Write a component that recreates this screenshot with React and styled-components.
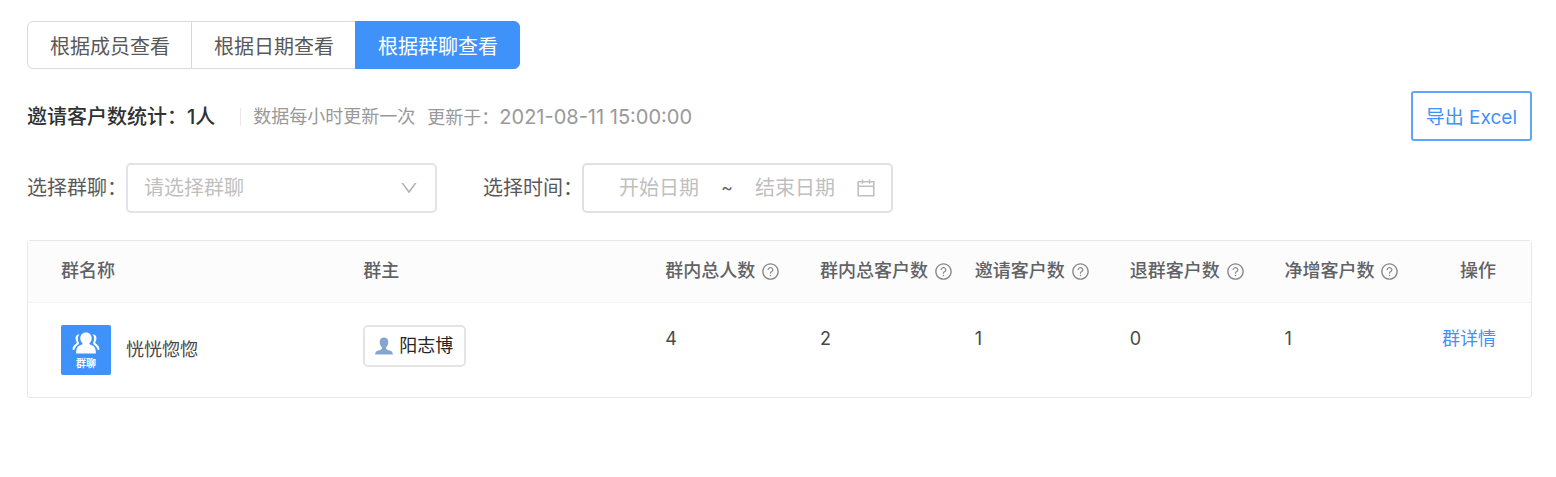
import React, {useState} from 'react';
import styled, {createGlobalStyle} from "styled-components";
import {AiOutlineCalendar, AiOutlineDown, AiOutlineQuestionCircle} from "react-icons/ai";

const GlobalStyle = createGlobalStyle`
    * {
        box-sizing: border-box;
    }

    body {
        margin: 0;
        background: #fff;
        color: #595959;
        font-family: Inter, "Noto Sans CJK SC", sans-serif;
        font-size: 18px;
        line-height: 26px;
    }

    button, input, select {
        font-family: inherit;
    }
`;

const Page = styled.main`
    padding: 21px 24px 24px 27px;
`;

const Tabs = styled.div`
    display: flex;
`;

const Tab = styled.button`
    height: 48px;
    padding: 0 21px 0 22px;
    margin-left: -1px;
    border: 1px solid ${({$active}) => $active ? '#3f92fa' : '#d9d9d9'};
    background: ${({$active}) => $active ? '#3f92fa' : '#fff'};
    color: ${({$active}) => $active ? '#fff' : '#595959'};
    font-size: 20px;
    cursor: pointer;

    &:first-child {
        margin-left: 0;
        border-radius: 6px 0 0 6px;
    }

    &:last-child {
        border-radius: 0 6px 6px 0;
    }
`;

const Summary = styled.div`
    display: flex;
    align-items: center;
    margin-top: 22px;
`;

const Total = styled.h1`
    margin: 0;
    padding-top: 2px;
    color: #303133;
    font-size: 20px;
    font-weight: 500;
`;

const UpdateInfo = styled.div`
    display: flex;
    align-items: center;
    gap: 12px;
    margin-left: 25px;
    padding-top: 2px;
    color: #999;

    &::before {
        content: "";
        width: 1px;
        height: 18px;
        background: #e8e8e8;
    }
`;

const UpdateTime = styled.time`
    font-size: 20px;
`;

const ExportButton = styled.button`
    height: 50px;
    margin-left: auto;
    padding: 0 13px 2px;
    border: 2px solid #5fa5fb;
    border-radius: 3px;
    background: #fff;
    color: #3f92fa;
    font-size: 19px;
    cursor: pointer;
`;

const Filters = styled.div`
    display: flex;
    gap: 46px;
    margin-top: 22px;
`;

const Field = styled.div`
    display: flex;
    align-items: center;
    font-size: 20px;
`;

const FieldLabel = styled.label`
    width: 99px;
    white-space: nowrap;
`;

const Control = styled.div`
    position: relative;
    display: flex;
    align-items: center;
    width: 311px;
    height: 50px;
    border: 2px solid ${({$tint}) => $tint || '#e0e0e0'};
    border-radius: 5px;
`;

const GroupSelect = styled.select`
    width: 100%;
    height: 100%;
    padding: 0 44px 0 16px;
    border: 0;
    outline: none;
    appearance: none;
    background: transparent;
    color: #bfbfbf;
    font-size: 20px;
`;

const SelectArrow = styled(AiOutlineDown)`
    position: absolute;
    right: 16px;
    color: #b0b0b0;
    font-size: 20px;
    pointer-events: none;
`;

const DateControl = styled(Control)`
    padding: 0 14px 0 19px;
    color: #bfbfbf;

    svg {
        flex: none;
        margin-left: 4px;
    }
`;

const DateInput = styled.input`
    flex: 1;
    min-width: 0;
    padding: 0;
    border: 0;
    outline: none;
    background: transparent;
    color: #595959;
    font-size: 20px;
    text-align: center;

    &::placeholder {
        color: #bfbfbf;
    }
`;

const Tilde = styled.span`
    width: 24px;
    color: #666;
    font-size: 18px;
    text-align: center;
`;

const TableBox = styled.div`
    margin-top: 27px;
    border: 1px solid #e8e8e8;
    border-radius: 3px;
`;

const Table = styled.table`
    width: 100%;
    border-collapse: collapse;
    table-layout: fixed;

    th, td {
        padding: 22px 0 22px 12px;
        text-align: left;
        vertical-align: top;
        white-space: nowrap;
    }

    th {
        height: 61px;
        padding-top: 0;
        padding-bottom: 0;
        border-bottom: 1px solid #f4f4f4;
        background: #fcfcfc;
        color: #606266;
        font-weight: 500;
        vertical-align: middle;
    }

    td {
        color: #484848;
        line-height: 28px;
    }

    th:first-child, td:first-child {
        padding-left: 33px;
    }

    th:last-child, td:last-child {
        padding-right: 35px;
        padding-left: 0;
        text-align: right;
    }
`;

const HeadCell = styled.span`
    display: inline-flex;
    align-items: center;
    gap: 6px;

    svg {
        color: #888;
        font-size: 19px;
    }
`;

const Group = styled.div`
    display: flex;
    align-items: center;
    gap: 15px;
`;

const GroupAvatar = styled.div`
    display: flex;
    flex-direction: column;
    align-items: center;
    width: 50px;
    height: 50px;
    padding-top: 6px;
    border-radius: 2px;
    background: #3f92fa;
    color: #fff;
    font-size: 10px;
    font-weight: 700;
    line-height: 18px;
`;

const Owner = styled.span`
    display: inline-flex;
    align-items: center;
    gap: 6px;
    height: 42px;
    padding: 0 11px 0 10px;
    border: 2px solid #e4e4e4;
    border-radius: 5px;
    color: #262626;
`;

const DetailLink = styled.a`
    color: #3f92fa;
    text-decoration: none;
`;

const GroupIcon = () => (
    <svg width="28" height="23" viewBox="0 0 28 23" fill="#fff" aria-hidden="true">
        <path d="M14 1.500c3.300 0 5.700 2.400 5.700 5.700 0 2.200-.9 3.900-2.300 5.100 0 1 .6 1.300 2 1.800 3 1 4.500 3.200 4.500 8.400H4.100c0-5.200 1.500-7.400 4.500-8.400 1.400-.5 2-.8 2-1.800-1.400-1.200-2.300-2.900-2.300-5.100 0-3.300 2.400-5.700 5.700-5.700z" />
        <path d="M7.400 3.300C4.400 3.500 3.300 5.400 3.600 7.900c.2 1.400.6 2.300 1.100 3 .2.900-.3 1.500-1.400 2.400C1.400 14.800.6 16.200.6 19h1.700c.5-2.300 1.600-3.700 3.200-4.800 1.400-1 1.800-2 1.100-3.300-1.100-2.100-1.200-4.800.8-7.600z" />
        <path d="M20.600 3.300c3 .2 4.100 2.100 3.800 4.600-.2 1.400-.6 2.300-1.100 3-.2.900.3 1.500 1.400 2.400 1.900 1.500 2.700 2.900 2.700 5.700h-1.700c-.5-2.300-1.600-3.700-3.200-4.800-1.400-1-1.800-2-1.100-3.300 1.100-2.100 1.200-4.800-.8-7.600z" />
    </svg>
);

const UserIcon = () => (
    <svg width="18" height="18" viewBox="0 0 18 18" fill="#85a5d0" aria-hidden="true">
        <path d="M9 .5c2.700 0 4.300 1.700 4.300 4.400 0 2.200-.8 4-2.100 5.200v1.600c.3.800 1.500 1.200 3.500 1.800 2.200.6 3 1.600 3.200 4H.1c.2-2.400 1-3.400 3.200-4 2-.6 3.200-1 3.500-1.800v-1.600C5.500 8.900 4.700 7.100 4.700 4.900 4.700 2.200 6.300.5 9 .5z" />
    </svg>
);

const tabs = ['根据成员查看', '根据日期查看', '根据群聊查看'];

const columns = [
    {title: '群名称', width: '21.5%'},
    {title: '群主', width: '20.1%'},
    {title: '群内总人数', width: '10.3%', help: true},
    {title: '群内总客户数', width: '10.3%', help: true},
    {title: '邀请客户数', width: '10.3%', help: true},
    {title: '退群客户数', width: '10.3%', help: true},
    {title: '净增客户数', width: '10.3%', help: true},
    {title: '操作', width: '6.9%'},
];

const rows = [
    {name: '恍恍惚惚', owner: '阳志博', counts: [4, 2, 1, 0, 1]},
];

const App = () => {
    const [active, setActive] = useState(2);

    return (
        <Page>
            <GlobalStyle />
            <Tabs>
                {tabs.map((tab, i) => (
                    <Tab key={tab} type="button" $active={i === active} onClick={() => setActive(i)}>{tab}</Tab>
                ))}
            </Tabs>

            <Summary>
                <Total>邀请客户数统计：1人</Total>
                <UpdateInfo>
                    <span>数据每小时更新一次</span>
                    <span>更新于：<UpdateTime>2021-08-11 15:00:00</UpdateTime></span>
                </UpdateInfo>
                <ExportButton type="button">导出 Excel</ExportButton>
            </Summary>

            <Filters>
                <Field>
                    <FieldLabel htmlFor="group">选择群聊：</FieldLabel>
                    <Control $tint="#e1e3ec">
                        <GroupSelect id="group" defaultValue="">
                            <option value="">请选择群聊</option>
                            <option value="1">恍恍惚惚</option>
                        </GroupSelect>
                        <SelectArrow />
                    </Control>
                </Field>
                <Field>
                    <FieldLabel htmlFor="start">选择时间：</FieldLabel>
                    <DateControl>
                        <DateInput id="start" placeholder="开始日期" />
                        <Tilde>~</Tilde>
                        <DateInput aria-label="结束日期" placeholder="结束日期" />
                        <AiOutlineCalendar size={22} />
                    </DateControl>
                </Field>
            </Filters>

            <TableBox>
                <Table>
                    <colgroup>
                        {columns.map(({title, width}) => <col key={title} style={{width}} />)}
                    </colgroup>
                    <thead>
                        <tr>
                            {columns.map(({title, help}) => (
                                <th key={title} scope="col">
                                    <HeadCell>{title}{help && <AiOutlineQuestionCircle />}</HeadCell>
                                </th>
                            ))}
                        </tr>
                    </thead>
                    <tbody>
                        {rows.map(({name, owner, counts}) => (
                            <tr key={name}>
                                <td>
                                    <Group>
                                        <GroupAvatar><GroupIcon />群聊</GroupAvatar>
                                        {name}
                                    </Group>
                                </td>
                                <td><Owner><UserIcon />{owner}</Owner></td>
                                {counts.map((count, i) => <td key={i}>{count}</td>)}
                                <td><DetailLink href="#detail">群详情</DetailLink></td>
                            </tr>
                        ))}
                    </tbody>
                </Table>
            </TableBox>
        </Page>
    )
}

export default App;
